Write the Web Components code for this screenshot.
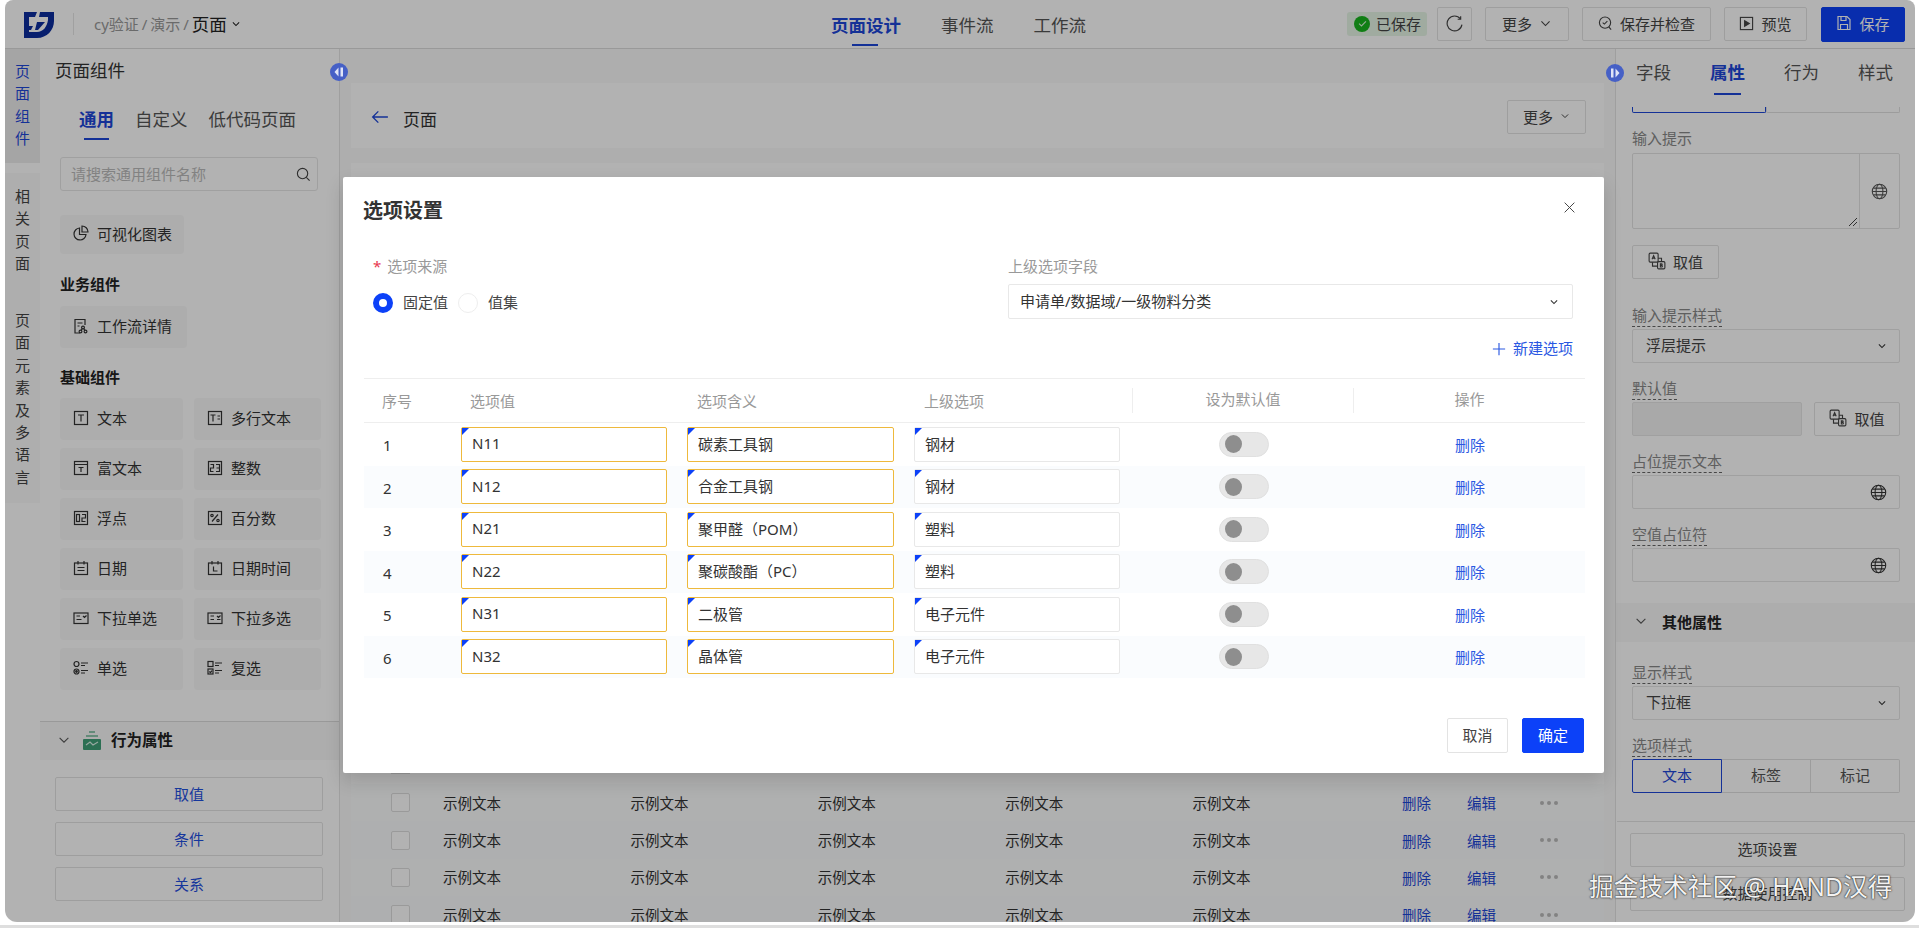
<!DOCTYPE html>
<html lang="zh">
<head>
<meta charset="utf-8">
<title>页面设计</title>
<style>
  html, body { margin: 0; height: 100%; overflow: hidden; background: #fff; }
  body { font-family: "Noto Sans", "Noto Sans CJK SC", sans-serif; font-size: 15px; color: #333; }
</style>
</head>
<body>
<designer-app></designer-app>

<script>
const ICONS = {
  chev: '<path d="M3 5.5l5 5 5-5"/>',
  tick: '<path d="M3 8.2l3.5 3.3L13 4.8"/>',
  text: '<rect x="1.5" y="1.5" width="13" height="13"/><path d="M5 5h6M8 5v6.5"/>',
  multi: '<rect x="1.5" y="1.5" width="13" height="13"/><path d="M3.5 5h5M6 5v6.5M10.5 6h2.5M10.5 9h2.5"/>',
  rich: '<rect x="1.5" y="1.5" width="13" height="13"/><path d="M1.5 4.5h13M5.5 7.5h5M8 7.5v4.5"/>',
  int: '<rect x="1.5" y="1.5" width="13" height="13"/><path d="M3.5 4.5h3v3.5h-3v3.5h3M9 4.5h3.5v7H9M9.5 8h3"/>',
  float: '<rect x="1.5" y="1.5" width="13" height="13"/><rect x="3.5" y="4.5" width="3" height="7"/><path d="M9 4.5h3.5v3.5H9v3.5h3.5"/>',
  percent: '<rect x="1.5" y="1.5" width="13" height="13"/><path d="M11 4.5L5 11.5"/><circle cx="5" cy="5.5" r="1.2"/><circle cx="11" cy="10.5" r="1.2"/>',
  date: '<rect x="1.5" y="3" width="13" height="11.5"/><path d="M5 1v3.5M11 1v3.5M4.5 7.5h7M4.5 10.5h7"/>',
  datetime: '<rect x="1.5" y="3" width="13" height="11.5"/><path d="M5 1v3.5M11 1v3.5M6.5 6.5v4.5h4"/>',
  drop: '<rect x="1" y="3" width="14" height="10.5"/><path d="M3.5 6h3.5M3.5 9.5h5M10 6l1.5 1.5L13.5 5.5"/>',
  drops: '<rect x="1" y="3" width="14" height="10.5"/><path d="M3.5 6h3.5M3.5 9.5h3.5M10 6l1.5 1.5L13.5 5.5M10 9.5h3.5"/>',
  radio: '<circle cx="3.5" cy="4" r="2.5"/><circle cx="3.5" cy="11.5" r="2.5"/><circle cx="3.5" cy="11.5" r=".8" fill="currentColor"/><path d="M8 3h7M8 5.5h4M8 10.5h7M8 13h4"/>',
  check: '<rect x="1" y="1.5" width="5" height="5"/><rect x="1" y="9" width="5" height="5"/><path d="M2.3 11.5l1.2 1.2 1.5-2M8 3h7M8 5.5h4M8 10.5h7M8 13h4"/>',
  pie: '<path d="M6.5 3a6 6 0 1 0 6.5 6.5H6.5Z"/><path d="M9 1a6 6 0 0 1 6 6H9Z"/>',
  flow: '<path d="M7 15H2V1.5h10V7"/><path d="M4.5 5h5M4.5 8h2"/><circle cx="10" cy="9.5" r="1.4"/><circle cx="7.5" cy="13.5" r="1.4"/><circle cx="12.5" cy="13.5" r="1.4"/><path d="M9.3 10.7l-1.2 1.6M10.7 10.7l1.2 1.6"/>',
  search: '<circle cx="7" cy="7" r="5.5"/><path d="M11 11l3.5 3.5"/>',
  globe: '<circle cx="8" cy="8" r="6.8"/><ellipse cx="8" cy="8" rx="3.2" ry="6.8"/><path d="M1.2 8h13.6M2.2 4.8h11.6M2.2 11.2h11.6"/>',
  trans: '<rect x="1" y="1" width="8" height="8" rx="1"/><rect x="8.5" y="8.5" width="6.5" height="6.5" rx="1"/><path d="M3.6 6.5L5 3.2l1.4 3.3M4.1 5.4h1.8M11 10.5v2.8h1.1a.7.7 0 0 0 0-1.4H11h.9a.7.7 0 0 0 0-1.4ZM4 9v3.5h4M12 8V5.5H9"/>',
  refresh: '<path d="M13.6 3.6A7 7 0 1 0 15 9"/><path d="M13.8 1.2v2.8H11"/>',
  save: '<path d="M2 1.5h9l3 3v10H2Z"/><path d="M5 1.5v4h5v-4M4.5 14.5v-5h7v5"/>',
  play: '<rect x="1.5" y="1.5" width="13" height="13"/><path d="M6 5l5 3-5 3Z" fill="currentColor"/>',
  inspect: '<circle cx="7.5" cy="7" r="6"/><path d="M5 7l1.8 1.6L10 5.5M11.5 11.5l2.5 3"/>',
  back: '<path d="M15 8H1.5M6.5 3L1.5 8l5 5"/>',
  plus: '<path d="M8 1v14M1 8h14"/>',
  close: '<path d="M2 2l12 12M14 2L2 14"/>'
};

function define(tag, css, html) {
  const tpl = document.createElement("template");
  tpl.innerHTML = `<style>${css}</style>${html}`;
  customElements.define(tag, class extends HTMLElement {
    constructor() {
      super();
      this.attachShadow({ mode: "open" });
      this.shadowRoot.appendChild(tpl.content.cloneNode(true));
    }
  });
}

class UiIcon extends HTMLElement {
  connectedCallback() {
    const size = this.getAttribute("size") || 16;
    const sw = this.getAttribute("sw") || 1.2;
    this.attachShadow({ mode: "open" }).innerHTML = `
      <style>:host { display: inline-flex; flex: none; } svg { display: block; }</style>
      <svg width="${size}" height="${size}" viewBox="0 0 16 16" fill="none" stroke="currentColor" stroke-width="${sw}">
        ${ICONS[this.getAttribute("name")] || ""}
      </svg>`;
  }
}
customElements.define("ui-icon", UiIcon);

define("ui-btn", `
  :host { display: inline-flex; align-items: center; justify-content: center; gap: 7px; box-sizing: border-box;
    height: 34px; padding-bottom: 2px; border: 1px solid #e3e3e3; border-radius: 2px; background: #fff; color: #444; font-size: 15px; white-space: nowrap; }
  :host([primary]) { background: #0c41f8; border-color: #0c41f8; color: #fff; }
  :host([link]) { color: #1f4fe0; }
`, `<slot></slot>`);

define("dash-label", `
  :host { display: block; height: 20px; margin-bottom: 2px; color: #888; font-size: 15px; line-height: 17px; }
  span { display: inline-block; height: 19px; border-bottom: 1px dashed #666; }
`, `<span><slot></slot></span>`);

define("comp-item", `
  :host { display: flex; align-items: center; box-sizing: border-box; height: 42px; padding: 0 0 3px 13px; gap: 8px;
    background: #f8f8f8; border-radius: 4px; color: #333; font-size: 15px; }
  ui-icon { color: #555; }
`, `<slot name="icon"></slot><slot></slot>`);

define("side-rail", `
  :host { display: flex; flex-direction: column; flex: none; width: 35px; background: #fff; font-size: 15px; color: #444; text-align: center; }
  .item { background: #f9f9f9; line-height: 22.4px; }
  .item span { display: block; width: 15px; margin: 0 auto; }
  .on { background: #ededed; color: #1e47d8; height: 114px; padding-top: 11px; box-sizing: border-box; margin-bottom: 10px; }
  .two { height: 125px; padding-top: 12px; box-sizing: border-box; }
  .three { height: 205px; padding-top: 11px; box-sizing: border-box; }
`, `
  <div class="item on"><span>页面组件</span></div>
  <div class="item two"><span>相关页面</span></div>
  <div class="item three"><span>页面元素及多语言</span></div>
`);

const COMPS = [
  ["text", "文本"], ["multi", "多行文本"], ["rich", "富文本"], ["int", "整数"], ["float", "浮点"], ["percent", "百分数"],
  ["date", "日期"], ["datetime", "日期时间"], ["drop", "下拉单选"], ["drops", "下拉多选"], ["radio", "单选"], ["check", "复选"]
];

define("comp-panel", `
  :host { display: flex; flex-direction: column; flex: none; box-sizing: border-box; width: 300px; background: #fff; border-right: 1px solid #e4e4e4; }
  h2 { margin: 0; height: 47px; padding-left: 15px; font-size: 17.5px; font-weight: 400; line-height: 43px; color: #333; }
  .scroll { flex: 1; min-height: 0; margin-bottom: 23px; overflow: hidden; padding-left: 20px; }
  .tabs { display: flex; gap: 21px; height: 48px; padding-left: 19px; font-size: 17.5px; line-height: 46px; color: #555; }
  .tabs b { position: relative; color: #1e47d8; font-weight: 700; }
  .tabs b::after { content: ""; position: absolute; left: 5px; right: 5px; bottom: 4px; height: 2px; background: #1e47d8; }
  .search { display: flex; align-items: center; justify-content: space-between; box-sizing: border-box; width: 258px; height: 34px; margin-top: 13px;
    padding: 0 6px 0 10px; border: 1px solid #e6e6e6; border-radius: 3px; color: #bbb; font-size: 15px; }
  .search span { padding-bottom: 2px; }
  .search ui-icon { color: #444; }
  .chart { width: 124px; margin-top: 24px; height: 39px; }
  .flow { width: 127px; margin-top: 11px; }
  h3 { margin: 21px 0 0; height: 20px; font-size: 15px; line-height: 18px; font-weight: 700; color: #222; }
  h3 + comp-item { margin-top: 11px; }
  h3.base { margin-top: 20px; }
  .grid { display: grid; grid-template-columns: 123px 127px; gap: 8px 11px; margin-top: 10px; }
  .sec { display: flex; align-items: center; height: 39px; box-sizing: border-box; padding: 0 0 3px 17px; background: #f8f8f8; border-top: 1px solid #dcdcdc;
    font-weight: 700; font-size: 15.5px; color: #222; }
  .sec ui-icon { color: #555; margin-right: 12px; }
  .sec svg { margin-right: 10px; }
  .btns { display: flex; flex-direction: column; gap: 11px; padding: 17px 16px 21px 15px; }
`, `
  <h2>页面组件</h2>
  <div class="scroll">
    <div class="tabs"><b>通用</b><span>自定义</span><span>低代码页面</span></div>
    <div class="search"><span>请搜索通用组件名称</span><ui-icon name="search" size="15"></ui-icon></div>
    <comp-item class="chart"><ui-icon slot="icon" name="pie"></ui-icon>可视化图表</comp-item>
    <h3>业务组件</h3>
    <comp-item class="flow"><ui-icon slot="icon" name="flow"></ui-icon>工作流详情</comp-item>
    <h3 class="base">基础组件</h3>
    <div class="grid">
      ${COMPS.map(c => `<comp-item><ui-icon slot="icon" name="${c[0]}"></ui-icon>${c[1]}</comp-item>`).join("")}
    </div>
  </div>
  <div class="sec">
    <ui-icon name="chev" size="14"></ui-icon>
    <svg width="18" height="20" viewBox="0 0 18 20"><path d="M6 1h6v2H6zM3 5h12v2H3z" fill="#8fc7ae"/><rect y="9" width="18" height="11" rx="1" fill="#3f9f78"/><path d="M3 15l4-3 3 3 5-3" fill="none" stroke="#d8f0e5" stroke-width="1.2"/></svg>
    行为属性
  </div>
  <div class="btns">
    <ui-btn link>取值</ui-btn>
    <ui-btn link>条件</ui-btn>
    <ui-btn link>关系</ui-btn>
  </div>
`);

define("demo-row", `
  :host { display: flex; align-items: center; height: 37.4px; padding-left: 40px; font-size: 14.5px; color: #333; background: #fbfcfd; }
  :host(:nth-child(even)) { background: #f9fbfc; }
  i { flex: none; box-sizing: border-box; width: 19px; height: 19px; margin-right: 33px; border: 1px solid #ddd; border-radius: 2px; background: #fff; }
  span { flex: none; width: 187.4px; padding-bottom: 1px; }
  a { flex: none; color: #1e47d8; }
  .del { width: 65px; margin-left: 22px; }
  .edit { width: 73px; }
  .dots { display: flex; gap: 3px; width: 18px; }
  .dots em { width: 4px; height: 4px; border-radius: 50%; background: #bbb; }
`, `
  <i></i>
  <span>示例文本</span><span>示例文本</span><span>示例文本</span><span>示例文本</span><span>示例文本</span>
  <a class="del">删除</a><a class="edit">编辑</a>
  <div class="dots"><em></em><em></em><em></em></div>
`);

define("page-canvas", `
  :host { display: flex; flex-direction: column; flex: 1; min-width: 0; box-sizing: border-box; padding: 34px 11px 0; background: #f9f9f9; }
  .head { display: flex; align-items: center; flex: none; height: 65px; padding: 3px 18px 0 20px; box-sizing: border-box; background: #fff; font-size: 17px; }
  .head .back { color: #1e47d8; margin-right: 14px; }
  .head .name { padding-top: 2px; }
  .head ui-btn { margin-left: auto; width: 79px; }
  .head ui-btn ui-icon { color: #444; }
  .card { flex: 1; min-height: 0; margin-top: 15px; padding-top: 605px; overflow: hidden; background: #fff; }
  .peek { width: 19px; height: 6px; margin: 0 0 10px 40px; box-sizing: border-box; border: 1px solid #ddd; border-top: 0; }
`, `
  <div class="head">
    <ui-icon class="back" name="back" size="18"></ui-icon><span class="name">页面</span>
    <ui-btn>更多<ui-icon name="chev" size="10" sw="1.6"></ui-icon></ui-btn>
  </div>
  <div class="card"><div class="peek"></div><section>${"<demo-row></demo-row>".repeat(4)}</section></div>
`);

define("prop-panel", `
  :host { display: flex; flex-direction: column; flex: none; box-sizing: border-box; width: 300px; background: #fff; border-left: 1px solid #e4e4e4; font-size: 15px; }
  .tabs { display: flex; gap: 39px; flex: none; height: 54px; padding-left: 20px; box-sizing: border-box; font-size: 17.5px; line-height: 47px; color: #555; }
  .tabs b { position: relative; color: #1e47d8; }
  .tabs b::after { content: ""; position: absolute; left: 4px; right: 4px; bottom: 8px; height: 2px; background: #1e47d8; }
  .body { flex: 1; min-height: 0; overflow: hidden; padding: 4px 15px 0 16px; }
  .cut { display: flex; height: 6px; margin-bottom: 17px; }
  .cut i { flex: 1; border: 1px solid #e0e0e0; border-top: 0; border-radius: 0 0 2px 2px; }
  .cut i:first-child { border-color: #1e47d8; }
  .plain { height: 20px; margin-bottom: 3px; line-height: 17px; color: #888; }
  .area { display: flex; height: 76px; box-sizing: border-box; border: 1px solid #e3e3e3; border-radius: 2px; }
  .area div { flex: 1; position: relative; }
  .area div::after { content: ""; position: absolute; right: 2px; bottom: 2px; width: 8px; height: 8px;
    background: linear-gradient(135deg, transparent 45%, #444 45%, #444 55%, transparent 55%, transparent 70%, #444 70%, #444 80%, transparent 80%); }
  .area span { display: flex; align-items: center; justify-content: center; width: 39px; border-left: 1px solid #e3e3e3; color: #555; }
  .pick { width: 87px; margin: 16px 0 28px; }
  .field { margin-bottom: 17px; }
  .ctl { display: flex; align-items: center; justify-content: space-between; box-sizing: border-box; height: 34px; padding: 0 12px 0 13px; border: 1px solid #e6e6e6; border-radius: 2px; color: #444; }
  .ctl span.t { padding-bottom: 3px; }
  .ctl ui-icon { color: #333; }
  .pair { display: flex; gap: 12px; }
  .pair .ctl { width: 170px; background: #f3f3f3; }
  .pair ui-btn { width: 86px; }
  .sec { display: flex; align-items: center; gap: 14px; height: 39px; margin: 21px -15px 22px -16px; padding: 0 0 3px 18px; box-sizing: border-box; background: #f8f8f8; font-weight: 700; color: #222; }
  .sec ui-icon { color: #555; }
  .seg { display: grid; grid-template-columns: 90px 89px 89px; height: 34px; text-align: center; line-height: 30px; color: #555; }
  .seg span { box-sizing: border-box; border: 1px solid #e0e0e0; border-left: 0; }
  .seg span:last-child { border-radius: 0 2px 2px 0; }
  .seg .on { border: 1px solid #1e47d8; border-radius: 2px 0 0 2px; color: #1e47d8; }
  .foot { display: flex; flex-direction: column; gap: 10px; flex: none; height: 101px; box-sizing: border-box; padding: 11px 10px 0 13px; margin-left: 1px; border-top: 1px solid #e4e4e4; }
  .foot ui-btn { padding-bottom: 4px; }
`, `
  <div class="tabs"><span>字段</span><b>属性</b><span>行为</span><span>样式</span></div>
  <div class="body">
    <div class="cut"><i></i><i></i></div>
    <div class="plain">输入提示</div>
    <div class="area"><div></div><span><ui-icon name="globe" size="17" sw="1"></ui-icon></span></div>
    <ui-btn class="pick"><ui-icon name="trans" size="18" sw="1"></ui-icon>取值</ui-btn>
    <div class="field"><dash-label>输入提示样式</dash-label><div class="ctl"><span class="t">浮层提示</span><ui-icon name="chev" size="10" sw="1.8"></ui-icon></div></div>
    <div class="field"><dash-label>默认值</dash-label><div class="pair"><div class="ctl"></div><ui-btn><ui-icon name="trans" size="18" sw="1"></ui-icon>取值</ui-btn></div></div>
    <div class="field"><dash-label>占位提示文本</dash-label><div class="ctl"><span></span><ui-icon name="globe" size="17" sw="1"></ui-icon></div></div>
    <div class="field"><dash-label>空值占位符</dash-label><div class="ctl"><span></span><ui-icon name="globe" size="17" sw="1"></ui-icon></div></div>
    <div class="sec"><ui-icon name="chev" size="14"></ui-icon>其他属性</div>
    <div class="field"><dash-label>显示样式</dash-label><div class="ctl"><span class="t">下拉框</span><ui-icon name="chev" size="10" sw="1.8"></ui-icon></div></div>
    <div class="field"><dash-label>选项样式</dash-label><div class="seg"><span class="on">文本</span><span>标签</span><span>标记</span></div></div>
  </div>
  <div class="foot"><ui-btn>选项设置</ui-btn><ui-btn>数据使用控制</ui-btn></div>
`);

define("app-header", `
  :host { display: flex; align-items: center; flex: none; box-sizing: border-box; height: 49px; padding-right: 10px; background: #fff; border-bottom: 1px solid #dcdcdc; }
  .left { display: flex; align-items: center; flex: none; width: 826px; padding-left: 19px; box-sizing: border-box; }
  .sep { width: 1px; height: 22px; margin: 0 20px 0 19px; background: #e6e6e6; }
  .crumb { color: #999; font-size: 15px; word-spacing: -1px; padding-bottom: 2px; }
  .cur { margin-left: 3px; color: #222; font-size: 17.5px; padding-bottom: 2px; }
  .left ui-icon { margin-left: 4px; color: #222; }
  .tabs { display: flex; gap: 40px; height: 48px; font-size: 17.5px; line-height: 50px; color: #555; }
  .tabs b { position: relative; color: #1e47d8; }
  .tabs b::after { content: ""; position: absolute; left: 21px; width: 26px; bottom: 2px; height: 2px; background: #1e47d8; }
  .right { display: flex; align-items: center; margin-left: auto; gap: 13px; }
  .chip { display: flex; align-items: center; gap: 6px; box-sizing: border-box; width: 80px; height: 24px; margin-right: -3px; padding: 0 0 1px 7px; background: #e6f5e6; border-radius: 3px; color: #444; }
  .chip i { display: flex; align-items: center; justify-content: center; width: 16px; height: 16px; border-radius: 50%; background: #18b51e; }
  .right ui-btn ui-icon { color: #444; }
  .right ui-btn[primary] ui-icon { color: #fff; }
`, `
  <div class="left">
    <svg width="30" height="27" viewBox="0 0 30 27"><path fill="#0c2d9e" d="M0 1h13l-2 5H5v9h4l-2 4H5v2h8c6 0 10-5 11-12V6h-9l1-5h14v9c0 9-7 17-17 17H0Z"/><path fill="#0c2d9e" d="M13 11h8l-7 8h-3Z"/></svg>
    <div class="sep"></div>
    <span class="crumb">cy验证 / 演示 /</span><span class="cur">页面</span><ui-icon name="chev" size="10" sw="1.8"></ui-icon>
  </div>
  <div class="tabs"><b>页面设计</b><span>事件流</span><span>工作流</span></div>
  <div class="right">
    <div class="chip"><i><ui-icon name="tick" size="11" sw="1.6" style="color:#d9f7d9"></ui-icon></i>已保存</div>
    <ui-btn style="width:35px"><ui-icon name="refresh" size="17" sw="1.1"></ui-icon></ui-btn>
    <ui-btn style="width:84px">更多<ui-icon name="chev" size="13" sw="1.4"></ui-icon></ui-btn>
    <ui-btn style="width:129px"><ui-icon name="inspect" size="15"></ui-icon>保存并检查</ui-btn>
    <ui-btn style="width:83px"><ui-icon name="play" size="15"></ui-icon>预览</ui-btn>
    <ui-btn primary style="width:84px;height:35px;margin-left:1px"><ui-icon name="save" size="16"></ui-icon>保存</ui-btn>
  </div>
`);

define("option-row", `
  :host { display: grid; grid-template-columns: 97px 226px 227px 218px 221px 232px; align-items: center; height: 42.5px; font-size: 15px; color: #333; }
  :host(:nth-child(even)) { background: #fafcfe; }
  .no { padding: 2px 0 0 19px; }
  .inp { position: relative; display: flex; align-items: center; box-sizing: border-box; width: 206px; height: 35px; padding: 0 0 2px 10px;
    background: #fff; border: 1px solid #e8e8e8; border-radius: 2px; }
  .inp::before { content: ""; position: absolute; left: 0; top: 0; border-style: solid; border-width: 7px 7px 0 0; border-color: #0c41f8 transparent transparent transparent; }
  .req { border-color: #eeb93c; }
  .mean { width: 207px; }
  .sw { display: flex; align-items: center; box-sizing: border-box; width: 50px; height: 25px; margin-left: 87px; padding-left: 5px; background: #e7e7e7; border: 1px solid #e0e0e0; border-radius: 12.5px; }
  .sw i { width: 17px; height: 18px; border-radius: 50%; background: #8e8e8e; }
  a { padding-left: 2px; text-align: center; color: #2a58e2; }
`, `
  <span class="no"><slot name="no"></slot></span>
  <div class="inp req"><slot name="val"></slot></div>
  <div class="inp req mean"><slot name="mean"></slot></div>
  <div class="inp"><slot name="parent"></slot></div>
  <div class="sw"><i></i></div>
  <a>删除</a>
`);

const OPTIONS = [
  ["N11", "碳素工具钢", "钢材"], ["N12", "合金工具钢", "钢材"],
  ["N21", '聚甲醛<span class="fw o">（</span>POM<span class="fw c">）</span>', "塑料"],
  ["N22", '聚碳酸酯<span class="fw o">（</span>PC<span class="fw c">）</span>', "塑料"],
  ["N31", "二极管", "电子元件"], ["N32", "晶体管", "电子元件"]
];

define("options-dialog", `
  :host { position: absolute; left: 338px; top: 177px; display: flex; flex-direction: column; box-sizing: border-box; width: 1261px; height: 596px;
    padding: 0 19px 20px 21px; background: #fff; border-radius: 2px; box-shadow: 0 8px 18px rgba(0,0,0,.15); }
  .head { display: flex; align-items: center; justify-content: space-between; flex: none; height: 68px; }
  h1 { margin: 0 0 3px -1px; font-size: 20px; font-weight: 700; color: #333; }
  .head ui-icon { margin: 0 9px 7px 0; color: #444; }
  .form { display: grid; grid-template-columns: 635px 565px; margin-top: 11px; padding-left: 9px; }
  .lab { height: 24px; margin-bottom: 4px; line-height: 21px; color: #999; }
  .lab em { margin-right: 6px; color: #e8384f; font-style: normal; }
  .radios { display: flex; align-items: center; height: 35px; padding-top: 3px; box-sizing: border-box; color: #444; }
  .radios i { box-sizing: border-box; width: 20px; height: 20px; margin-right: 10px; border-radius: 50%; border: 1px solid #eee; }
  .radios i.on { border: 6px solid #0c41f8; }
  .radios span { margin-right: 10px; padding-bottom: 3px; }
  .sel { display: flex; align-items: center; justify-content: space-between; box-sizing: border-box; height: 35px; padding: 0 13px 0 11px; border: 1px solid #e8e8e8; border-radius: 2px; color: #333; }
  .sel span { padding-bottom: 2px; }
  .sel ui-icon { color: #333; }
  .add { display: flex; align-items: center; justify-content: flex-end; gap: 7px; height: 20px; margin: 20px 12px 19px 0; color: #2a58e2; }
  .add span { padding-bottom: 3px; }
  .thead { display: grid; grid-template-columns: 97px 226px 227px 218px 221px 232px; align-items: center; flex: none; height: 45px; box-sizing: border-box;
    border-top: 1px solid #eee; border-bottom: 1px solid #eee; color: #999; }
  .thead span { padding: 0 0 1px 9px; }
  .thead span:nth-child(1) { padding-left: 18px; }
  .thead span:nth-child(3), .thead span:nth-child(4) { padding-left: 10px; }
  .thead .c { height: 25px; padding: 0; line-height: 23px; text-align: center; border-left: 1px solid #eee; }
  .fw { display: inline-block; width: 15px; }
  .fw.o { text-align: right; }
  .fw.c { text-align: left; }
  .foot { display: flex; align-items: flex-end; justify-content: flex-end; flex: 1; gap: 14px; padding-right: 1px; }
  .foot ui-btn { width: 61px; height: 35px; }
  .foot ui-btn[primary] { width: 62px; }
`, `
  <div class="head"><h1>选项设置</h1><ui-icon name="close" size="13" sw="1.2"></ui-icon></div>
  <div class="form">
    <div>
      <div class="lab"><em>*</em>选项来源</div>
      <div class="radios"><i class="on"></i><span>固定值</span><i></i><span>值集</span></div>
    </div>
    <div>
      <div class="lab">上级选项字段</div>
      <div class="sel"><span>申请单/数据域/一级物料分类</span><ui-icon name="chev" size="10" sw="1.8"></ui-icon></div>
    </div>
  </div>
  <div class="add"><ui-icon name="plus" size="14" sw="1.3"></ui-icon><span>新建选项</span></div>
  <div class="thead"><span>序号</span><span>选项值</span><span>选项含义</span><span>上级选项</span><span class="c">设为默认值</span><span class="c">操作</span></div>
  <div class="rows">
    ${OPTIONS.map((o, i) => `<option-row><span slot="no">${i + 1}</span><span slot="val">${o[0]}</span><span slot="mean">${o[1]}</span><span slot="parent">${o[2]}</span></option-row>`).join("")}
  </div>
  <div class="foot"><ui-btn>取消</ui-btn><ui-btn primary>确定</ui-btn></div>
`);

define("designer-app", `
  :host { display: block; position: relative; width: 1919px; height: 928px; overflow: hidden; background: #fff; }
  .strip { position: absolute; left: 0; right: 0; bottom: 0; height: 3px; background: #dedede; }
  .win { position: absolute; left: 5px; top: 0; display: flex; flex-direction: column; width: 1910px; height: 922px; overflow: hidden; border-radius: 8px 8px 12px 12px; background: #fff; }
  .main { display: flex; flex: 1; min-height: 0; }
  .mask { position: absolute; inset: 0; background: rgba(0,0,0,.3); }
  .knob { position: absolute; display: block; }
  .mark { position: absolute; left: 1589px; top: 869px; font-size: 24.7px; line-height: 36px; white-space: nowrap; color: #f2f2f2; text-shadow: 0 0 2px #222, 0 0 1px #222; }
`, `
  <div class="strip"></div>
  <div class="win">
    <app-header></app-header>
    <div class="main">
      <side-rail></side-rail>
      <comp-panel></comp-panel>
      <page-canvas></page-canvas>
      <prop-panel></prop-panel>
    </div>
    <div class="mask"></div>
    <svg class="knob" style="left:325px;top:63px" width="18" height="18" viewBox="0 0 18 18"><circle cx="9" cy="9" r="9" fill="#4660c6"/><path d="M8.5 4.5L4.5 9l4 4.5Z" fill="#dfe4f7"/><rect x="10.5" y="4.5" width="2.5" height="9" fill="#dfe4f7"/></svg>
    <svg class="knob" style="left:1601px;top:64px" width="18" height="18" viewBox="0 0 18 18"><circle cx="9" cy="9" r="9" fill="#4660c6"/><path d="M9.5 4.5L13.5 9l-4 4.5Z" fill="#dfe4f7"/><rect x="5" y="4.5" width="2.5" height="9" fill="#dfe4f7"/></svg>
    <options-dialog></options-dialog>
  </div>
  <div class="mark">掘金技术社区 @ HAND汉得</div>
`);
</script>
</body>
</html>
